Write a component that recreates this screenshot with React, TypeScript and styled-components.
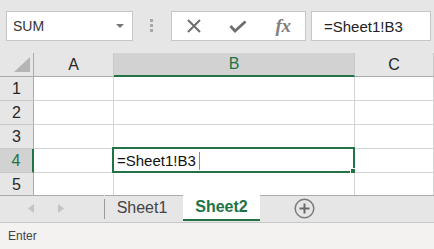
import React from 'react';
import styled, { createGlobalStyle } from 'styled-components';

const GREEN = '#217346';

const GlobalStyle = createGlobalStyle`
	html, body {
		margin: 0;
		padding: 0;
		background: #ffffff;
	}
`;

const Window = styled.div`
	width: 434px;
	height: 249px;
	overflow: hidden;
	display: flex;
	flex-direction: column;
	font-family: 'Liberation Sans', Arial, sans-serif;
	color: #262626;
`;

const FormulaBar = styled.div`
	height: 53px;
	flex: none;
	box-sizing: border-box;
	padding: 11px 0 0 6px;
	background: #e6e6e6;
	display: flex;
	align-items: flex-start;
`;

const NameBox = styled.div`
	width: 127px;
	height: 30px;
	box-sizing: border-box;
	border: 1px solid #c6c6c6;
	background: #ffffff;
	display: flex;
	align-items: center;
	justify-content: space-between;
	padding: 0 8px 0 6px;
	font-size: 14px;
	color: #333333;
`;

const Grip = styled.div`
	margin: 8px 0 0 17px;
	display: flex;
	flex-direction: column;
	gap: 2px;
`;

const GripDot = styled.span`
	width: 3px;
	height: 3px;
	background: #a8a8a8;
`;

const FxGroup = styled.div`
	margin-left: 18px;
	width: 135px;
	height: 30px;
	box-sizing: border-box;
	border: 1px solid #c6c6c6;
	background: #ffffff;
	display: grid;
	grid-template-columns: 43px 46px 1fr;
`;

const FxButton = styled.div`
	display: flex;
	align-items: center;
	justify-content: center;
`;

const FxLabel = styled.span`
	font-family: 'Liberation Serif', 'Times New Roman', serif;
	font-style: italic;
	font-weight: 700;
	font-size: 19px;
	color: #808080;
	letter-spacing: -0.5px;
	margin-top: -1px;
`;

const FormulaInput = styled.div`
	margin-left: 5px;
	width: 120px;
	height: 30px;
	box-sizing: border-box;
	border: 1px solid #c6c6c6;
	background: #ffffff;
	display: flex;
	align-items: center;
	padding-left: 12px;
	font-size: 15px;
	color: #222222;
`;

const Sheet = styled.div`
	height: 142px;
	flex: none;
	overflow: hidden;
	display: grid;
	grid-template-columns: 34px 80px 241px 1fr;
	grid-auto-rows: 24px;
`;

const Corner = styled.div`
	box-sizing: border-box;
	background: #e6e6e6;
	border-right: 1px solid #ababab;
	border-bottom: 1px solid #ababab;
	display: flex;
	align-items: flex-end;
	justify-content: flex-end;
	padding: 0 3px 4px 0;
`;

const ColHead = styled.div<{ $active?: boolean }>`
	box-sizing: border-box;
	background: ${({ $active }) => ($active ? '#d2d2d2' : '#e6e6e6')};
	border-right: 1px solid #c8c8c8;
	border-bottom: ${({ $active }) => ($active ? `2px solid ${GREEN}` : '1px solid #ababab')};
	display: flex;
	align-items: center;
	justify-content: center;
	font-size: 16px;
	color: ${({ $active }) => ($active ? GREEN : '#262626')};
`;

const RowHead = styled.div<{ $active?: boolean }>`
	box-sizing: border-box;
	background: ${({ $active }) => ($active ? '#d2d2d2' : '#e6e6e6')};
	border-right: ${({ $active }) => ($active ? `2px solid ${GREEN}` : '1px solid #ababab')};
	border-bottom: 1px solid #c8c8c8;
	display: flex;
	align-items: center;
	justify-content: center;
	font-size: 16px;
	color: ${({ $active }) => ($active ? GREEN : '#262626')};
`;

const Cell = styled.div`
	position: relative;
	box-sizing: border-box;
	background: #ffffff;
	border-right: 1px solid #d4d4d4;
	border-bottom: 1px solid #d4d4d4;
	display: flex;
	align-items: center;
	padding-left: 3px;
	font-size: 15px;
	color: #111111;
`;

const Selection = styled.div`
	position: absolute;
	top: -2px;
	left: -2px;
	right: -1px;
	bottom: -1px;
	border: 2px solid ${GREEN};
	pointer-events: none;
`;

const FillHandle = styled.span`
	position: absolute;
	right: -3px;
	bottom: -3px;
	width: 5px;
	height: 5px;
	background: ${GREEN};
	box-shadow: 0 0 0 1px #ffffff;
`;

const Caret = styled.span`
	display: inline-block;
	width: 0;
	height: 18px;
	margin-left: 3px;
	border-left: 1px solid #8a8a8a;
`;

const TabBar = styled.div`
	height: 28px;
	flex: none;
	box-sizing: border-box;
	background: #e6e6e6;
	border-bottom: 1px solid #c8c8c8;
	display: flex;
	align-items: flex-start;
`;

const NavArea = styled.div`
	width: 104px;
	height: 26px;
	box-sizing: border-box;
	border-top: 1px solid #ababab;
	display: flex;
	align-items: center;
	padding-left: 28px;
	gap: 24px;
`;

const Divider = styled.span`
	width: 1px;
	height: 20px;
	margin-top: 4px;
	background: #9a9a9a;
`;

const Tab = styled.div<{ $active?: boolean }>`
	height: 26px;
	box-sizing: border-box;
	flex: none;
	display: flex;
	align-items: center;
	justify-content: center;
	font-size: 16px;
	background: ${({ $active }) => ($active ? '#ffffff' : 'transparent')};
	border-top: ${({ $active }) => ($active ? 'none' : '1px solid #ababab')};
	border-bottom: ${({ $active }) => ($active ? `2px solid ${GREEN}` : 'none')};
	font-weight: ${({ $active }) => ($active ? 700 : 400)};
	color: ${({ $active }) => ($active ? GREEN : '#444444')};
	width: ${({ $active }) => ($active ? '77px' : '78px')};
	padding: ${({ $active }) => ($active ? '0' : '0 4px 1px 0')};
`;

const Filler = styled.div`
	flex: 1;
	height: 26px;
	box-sizing: border-box;
	border-top: 1px solid #ababab;
	display: flex;
	align-items: center;
	padding-left: 34px;
`;

const StatusBar = styled.div`
	flex: 1;
	background: #f3f2f1;
	display: flex;
	align-items: center;
	padding-left: 8px;
	font-size: 12px;
	color: #444444;
`;

const DropArrow = () => (
	<svg width="8" height="4" viewBox="0 0 8 4">
		<polygon points="0,0 8,0 4,4" fill="#777777" />
	</svg>
);

const CancelIcon = () => (
	<svg width="16" height="14" viewBox="0 0 16 14">
		<path d="M2 1 L14 13 M14 1 L2 13" stroke="#6e6e6e" strokeWidth="2" fill="none" />
	</svg>
);

const EnterIcon = () => (
	<svg width="18" height="13" viewBox="0 0 18 13">
		<path d="M1.5 6 L6 11 L16.5 1.5" stroke="#6e6e6e" strokeWidth="2.8" fill="none" />
	</svg>
);

const CornerMark = () => (
	<svg width="16" height="15" viewBox="0 0 16 15">
		<polygon points="16,0 16,15 0,15" fill="#b5b5b5" />
	</svg>
);

const NavArrow: React.FC<{ dir: 'left' | 'right' }> = ({ dir }) => (
	<svg width="6" height="9" viewBox="0 0 6 9">
		<polygon points={dir === 'left' ? '6,0 6,9 0,4.5' : '0,0 0,9 6,4.5'} fill="#c4c4c4" />
	</svg>
);

const AddSheetIcon = () => (
	<svg width="21" height="21" viewBox="0 0 21 21">
		<circle cx="10.5" cy="10.5" r="9.3" stroke="#7a7a7a" strokeWidth="1.5" fill="none" />
		<path d="M10.5 5.5 V15.5 M5.5 10.5 H15.5" stroke="#6a6a6a" strokeWidth="2" />
	</svg>
);

const columns = ['A', 'B', 'C'];
const rows = [1, 2, 3, 4, 5];

const App: React.FC = () => {
	return (
		<Window>
			<GlobalStyle />
			<FormulaBar>
				<NameBox>
					<span>SUM</span>
					<DropArrow />
				</NameBox>
				<Grip>
					<GripDot />
					<GripDot />
					<GripDot />
				</Grip>
				<FxGroup>
					<FxButton>
						<CancelIcon />
					</FxButton>
					<FxButton>
						<EnterIcon />
					</FxButton>
					<FxButton>
						<FxLabel>fx</FxLabel>
					</FxButton>
				</FxGroup>
				<FormulaInput>=Sheet1!B3</FormulaInput>
			</FormulaBar>
			<Sheet>
				<Corner>
					<CornerMark />
				</Corner>
				{columns.map((col) => (
					<ColHead key={col} $active={col === 'B'}>
						{col}
					</ColHead>
				))}
				{rows.map((row) => (
					<React.Fragment key={row}>
						<RowHead $active={row === 4}>{row}</RowHead>
						{columns.map((col) =>
							row === 4 && col === 'B' ? (
								<Cell key={col}>
									=Sheet1!B3
									<Caret />
									<Selection>
										<FillHandle />
									</Selection>
								</Cell>
							) : (
								<Cell key={col} />
							)
						)}
					</React.Fragment>
				))}
			</Sheet>
			<TabBar>
				<NavArea>
					<NavArrow dir="left" />
					<NavArrow dir="right" />
				</NavArea>
				<Divider />
				<Tab>Sheet1</Tab>
				<Tab $active>Sheet2</Tab>
				<Filler>
					<AddSheetIcon />
				</Filler>
			</TabBar>
			<StatusBar>Enter</StatusBar>
		</Window>
	);
};

export default App;
